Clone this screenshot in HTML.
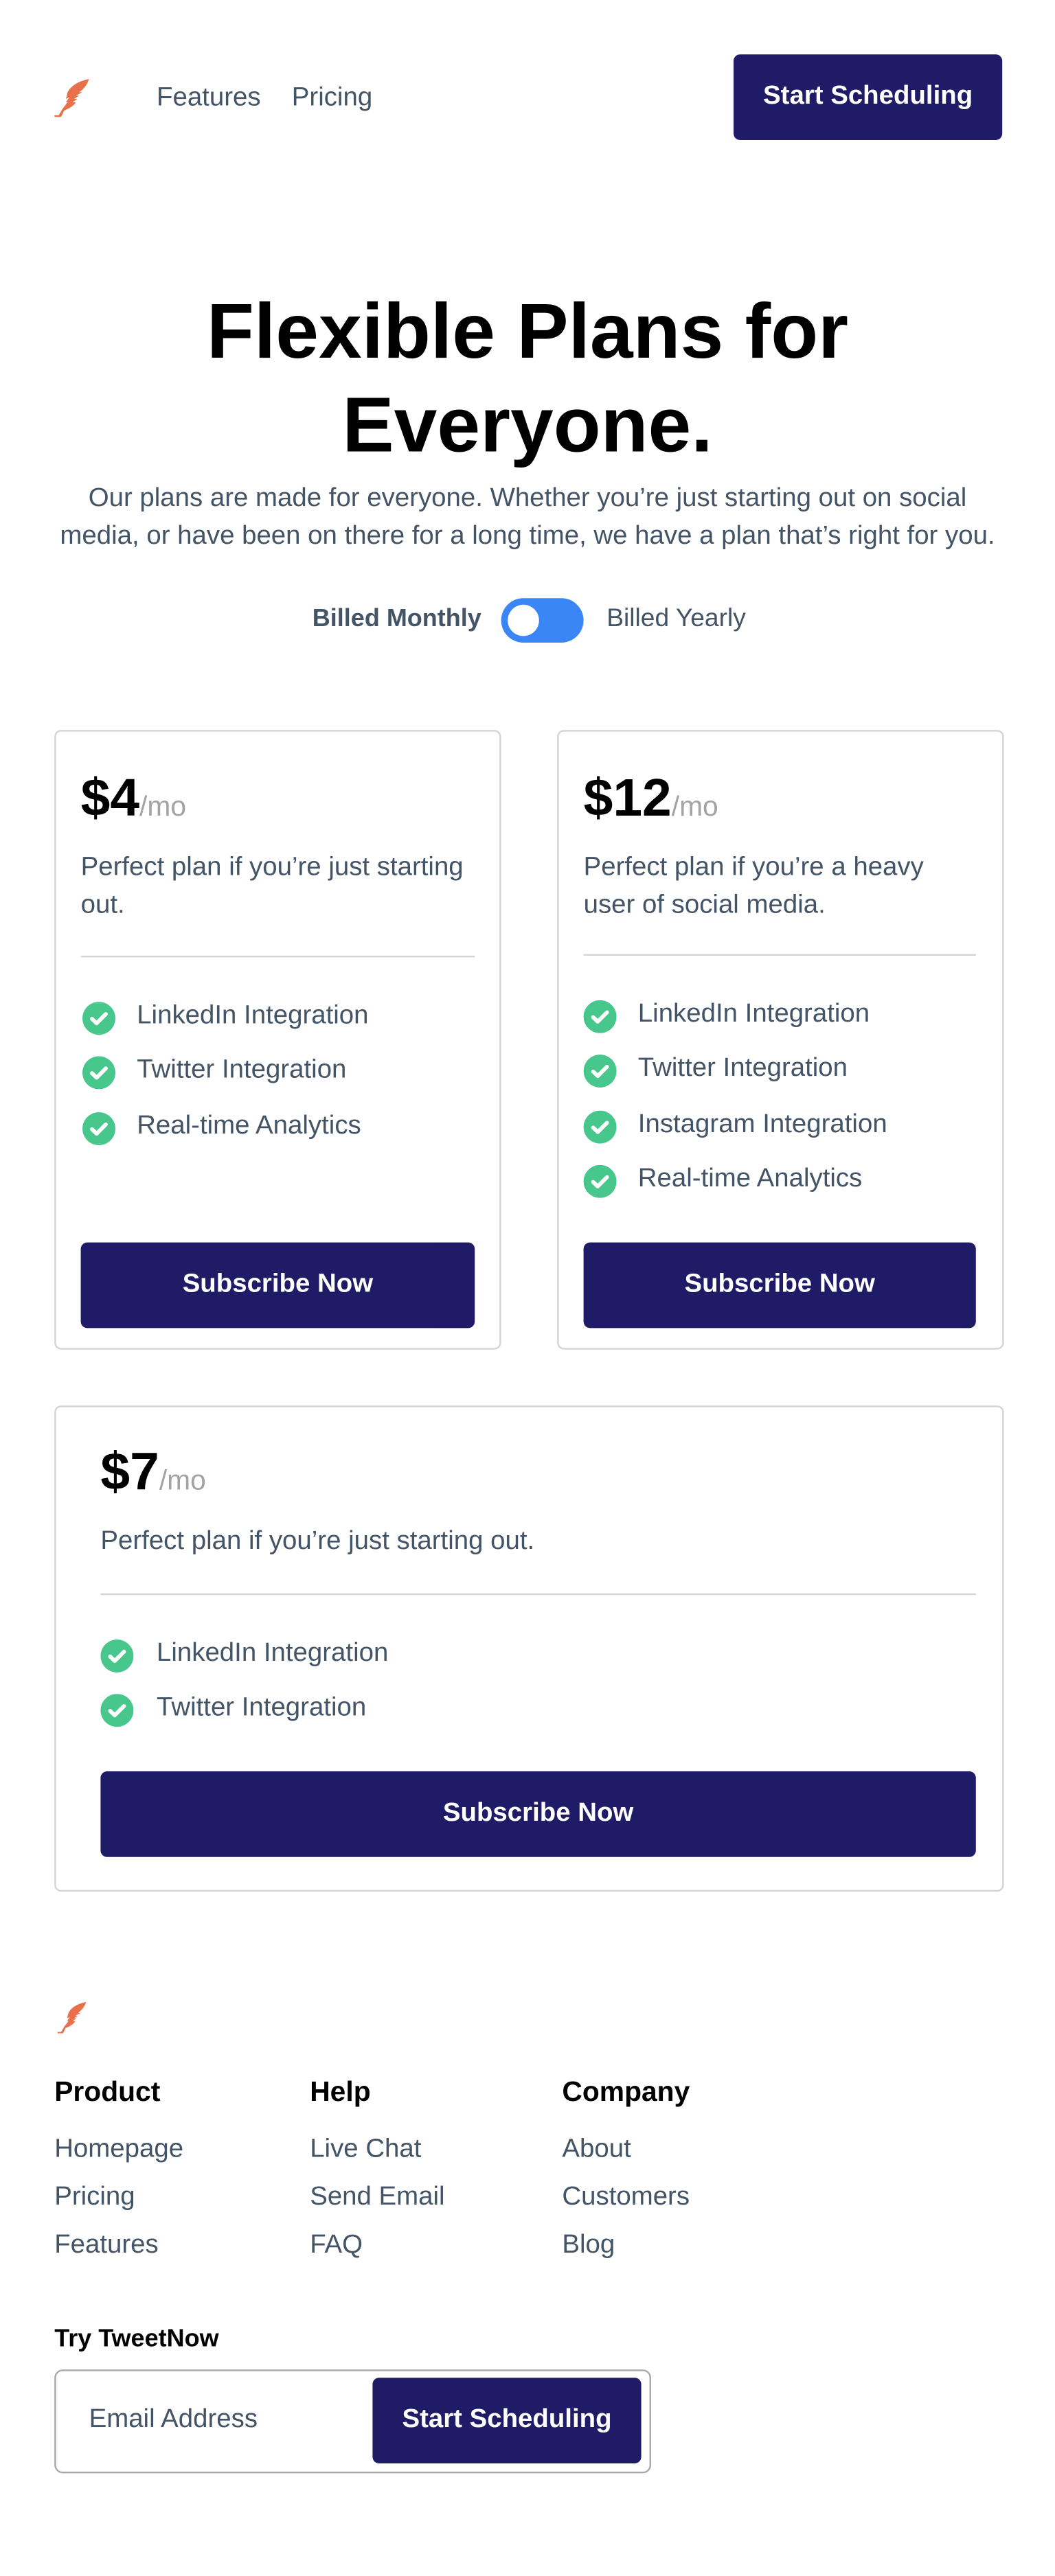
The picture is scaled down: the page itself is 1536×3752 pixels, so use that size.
<!DOCTYPE html>
<html><head><meta charset="utf-8"><style>
html,body{margin:0;padding:0;background:#fff;width:1536px;height:3752px;overflow:hidden}
#w{width:640px;height:1563.4px;transform:scale(2.4);transform-origin:0 0;position:relative;font-family:"Liberation Sans",Arial,sans-serif;color:#425466}
.a{position:absolute;white-space:nowrap}
.btn{position:absolute;background:#1f1b66;color:#fff;font-weight:bold;font-size:16px;border-radius:4px;display:flex;align-items:center;justify-content:center}
.card{position:absolute;border:1px solid #d4d4d4;border-radius:4px;box-sizing:border-box}
.t{font-size:16px;line-height:20px;color:#425466}
.price{font-size:32px;font-weight:bold;color:#000;line-height:36px}
.price span{font-size:17px;font-weight:normal;color:#a3a3a3}
.hr{position:absolute;height:1px;background:#d4d4d4}
.chk{position:absolute;width:20px;height:20px}
.fh{font-size:17px;font-weight:bold;color:#000;line-height:20px}
</style></head><body><div id="w">
<svg class="a" style="left:33px;top:48px" width="22" height="23" viewBox="0 0 22 23"><path d="M21 0C15 1 10 4 8 8L7 12 9 11 7 14 8 14 5 18 2 23 4 23 6 19C9 18 12 16 13 14L11 14 14 12 12 12 15 10 13 10 17 8 15 8C18 6 20 3 21 0Z" fill="#e8704a"/><rect x="0" y="22" width="3" height="1" fill="#e8704a"/></svg>
<div class="a t" style="left:95px;top:50px">Features</div>
<div class="a t" style="left:177px;top:50px">Pricing</div>
<div class="btn" style="left:445px;top:33px;width:163px;height:52px">Start Scheduling</div>

<div class="a" style="left:0;width:640px;top:172px;text-align:center;font-size:47px;font-weight:bold;color:#000;line-height:57px;white-space:normal">Flexible Plans for<br>Everyone.</div>
<div class="a" style="left:0;width:640px;top:291px;text-align:center;font-size:16px;line-height:23px;white-space:normal">Our plans are made for everyone. Whether you’re just starting out on social<br>media, or have been on there for a long time, we have a plan that’s right for you.</div>

<div class="a t" style="left:187px;top:366px;font-weight:bold;width:105px;text-align:right;font-size:15px">Billed Monthly</div>
<div class="a" style="left:304px;top:363px;width:50px;height:27px;border-radius:14px;background:#3b86f6"><div style="position:absolute;left:4px;top:4px;width:19px;height:19px;border-radius:50%;background:#fff"></div></div>
<div class="a t" style="left:368px;top:366px;font-size:15.5px">Billed Yearly</div>

<div class="card" style="left:33px;top:443px;width:271px;height:376px"></div>
<div class="a price" style="left:49px;top:466px">$4<span>/mo</span></div>
<div class="a t" style="left:49px;top:515px;line-height:23px">Perfect plan if you’re just starting<br>out.</div>
<div class="hr" style="left:49px;top:580px;width:239px"></div>

<div class="card" style="left:338px;top:443px;width:271px;height:376px"></div>
<div class="a price" style="left:354px;top:466px">$12<span>/mo</span></div>
<div class="a t" style="left:354px;top:515px;line-height:23px">Perfect plan if you’re a heavy<br>user of social media.</div>
<div class="hr" style="left:354px;top:579px;width:238px"></div>

<div class="card" style="left:33px;top:853px;width:576px;height:295px"></div>
<div class="a price" style="left:61px;top:875px">$7<span>/mo</span></div>
<div class="a t" style="left:61px;top:926px">Perfect plan if you’re just starting out.</div>
<div class="hr" style="left:61px;top:967px;width:531px"></div>

<svg width="0" height="0" style="position:absolute"><defs><symbol id="c" viewBox="0 0 20 20"><circle cx="10" cy="10" r="10" fill="#48c78c"/><path d="M5.8 10.3l2.8 2.7 5.6-5.6" stroke="#fff" stroke-width="2.4" fill="none" stroke-linecap="round" stroke-linejoin="round"/></symbol></defs></svg>

<svg class="chk" style="left:50px;top:608px"><use href="#c"/></svg><div class="a t" style="left:83px;top:607px">LinkedIn Integration</div>
<svg class="chk" style="left:50px;top:641px"><use href="#c"/></svg><div class="a t" style="left:83px;top:640px">Twitter Integration</div>
<svg class="chk" style="left:50px;top:675px"><use href="#c"/></svg><div class="a t" style="left:83px;top:674px">Real-time Analytics</div>

<svg class="chk" style="left:354px;top:607px"><use href="#c"/></svg><div class="a t" style="left:387px;top:606px">LinkedIn Integration</div>
<svg class="chk" style="left:354px;top:640px"><use href="#c"/></svg><div class="a t" style="left:387px;top:639px">Twitter Integration</div>
<svg class="chk" style="left:354px;top:674px"><use href="#c"/></svg><div class="a t" style="left:387px;top:673px">Instagram Integration</div>
<svg class="chk" style="left:354px;top:707px"><use href="#c"/></svg><div class="a t" style="left:387px;top:706px">Real-time Analytics</div>

<svg class="chk" style="left:61px;top:995px"><use href="#c"/></svg><div class="a t" style="left:95px;top:994px">LinkedIn Integration</div>
<svg class="chk" style="left:61px;top:1028px"><use href="#c"/></svg><div class="a t" style="left:95px;top:1027px">Twitter Integration</div>

<div class="btn" style="left:49px;top:754px;width:239px;height:52px">Subscribe Now</div>
<div class="btn" style="left:354px;top:754px;width:238px;height:52px">Subscribe Now</div>
<div class="btn" style="left:61px;top:1075px;width:531px;height:52px">Subscribe Now</div>

<svg class="a" style="left:33px;top:1215px" width="22" height="19" viewBox="0 0 22 23"><path d="M21 0C15 1 10 4 8 8L7 12 9 11 7 14 8 14 5 18 2 23 4 23 6 19C9 18 12 16 13 14L11 14 14 12 12 12 15 10 13 10 17 8 15 8C18 6 20 3 21 0Z" fill="#e8704a"/><rect x="0" y="22" width="3" height="1" fill="#e8704a"/></svg>

<div class="a fh" style="left:33px;top:1260px">Product</div>
<div class="a t" style="left:33px;top:1295px">Homepage</div>
<div class="a t" style="left:33px;top:1324px">Pricing</div>
<div class="a t" style="left:33px;top:1353px">Features</div>
<div class="a fh" style="left:188px;top:1260px">Help</div>
<div class="a t" style="left:188px;top:1295px">Live Chat</div>
<div class="a t" style="left:188px;top:1324px">Send Email</div>
<div class="a t" style="left:188px;top:1353px">FAQ</div>
<div class="a fh" style="left:341px;top:1260px">Company</div>
<div class="a t" style="left:341px;top:1295px">About</div>
<div class="a t" style="left:341px;top:1324px">Customers</div>
<div class="a t" style="left:341px;top:1353px">Blog</div>

<div class="a" style="left:33px;top:1411px;font-size:15px;font-weight:bold;color:#000;line-height:18px">Try TweetNow</div>
<div class="card" style="left:33px;top:1438px;width:362px;height:63px;border-color:#a8a8a8;border-radius:5px"></div>
<div class="a t" style="left:54px;top:1459px">Email Address</div>
<div class="btn" style="left:226px;top:1443px;width:163px;height:52px">Start Scheduling</div>
</div></body></html>
